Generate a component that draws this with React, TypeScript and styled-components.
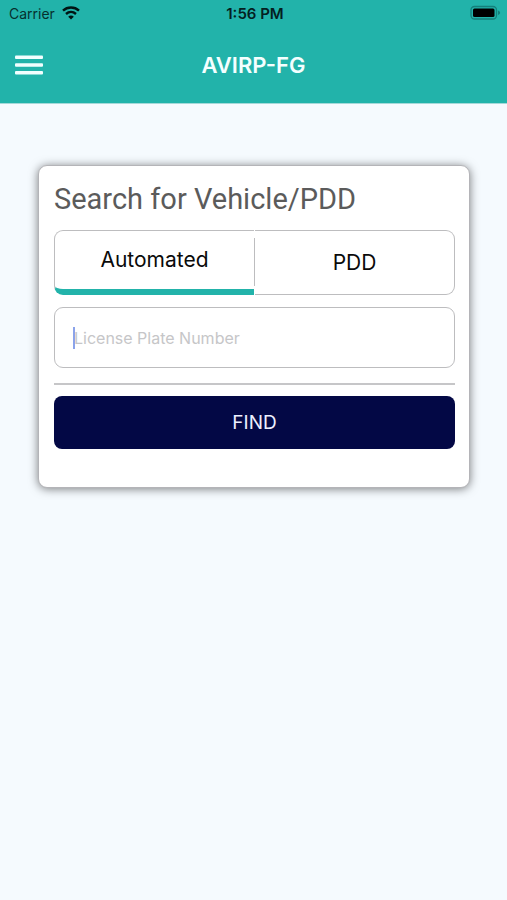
import React, { useState } from "react";
import styled, { createGlobalStyle } from "styled-components";

const teal = "#22b3aa";
const line = "#bdbdbf";

const GlobalStyle = createGlobalStyle`
  * { box-sizing: border-box; }
  body {
    margin: 0;
    background: #f5fafe;
    font-family: Inter, "Liberation Sans", sans-serif;
  }
  button, input { font-family: inherit; }
`;

const Header = styled.header`
  background: ${teal};
  border-bottom: 1px solid #a5d9d9;
`;

const StatusBar = styled.div`
  display: grid;
  grid-template-columns: 1fr auto 1fr;
  align-items: center;
  height: 26px;
  padding: 0 6px 0 9px;
  font-size: 14px;
  color: #06302e;
`;

const Carrier = styled.div`
  display: flex;
  align-items: center;
  gap: 7px;
`;

const Clock = styled.time`
  font-size: 15px;
  font-weight: 600;
  color: #04201f;
`;

const BatteryIcon = styled.svg`
  justify-self: end;
`;

const NavBar = styled.div`
  display: grid;
  grid-template-columns: 44px 1fr 44px;
  align-items: center;
  height: 77px;
  padding: 0 7px;
`;

const MenuButton = styled.button`
  display: grid;
  place-items: center;
  height: 44px;
  padding: 0;
  border: 0;
  background: none;
  color: #f2ffff;
  cursor: pointer;
`;

const AppTitle = styled.h1`
  margin: 0;
  text-align: center;
  font-size: 22px;
  line-height: 24px;
  font-weight: 600;
  color: #f4ffff;
`;

const Main = styled.main`
  padding: 61px 37px 40px 38px;
`;

const Card = styled.form`
  display: flex;
  flex-direction: column;
  padding: 15px 14px 38px 15px;
  border: 1px solid #b4b4b8;
  border-radius: 9px;
  background: #fff;
  box-shadow: 0 1px 10px rgba(0, 0, 0, 0.5);
`;

const CardTitle = styled.h2`
  margin: 0 0 12px;
  font-family: Roboto, Inter, sans-serif;
  font-size: 29px;
  line-height: 37px;
  font-weight: 400;
  color: #5b5b5b;
`;

const Tabs = styled.div`
  display: grid;
  grid-template-columns: 1fr 1px 1fr;
  height: 65px;
`;

const Tab = styled.button<{ $side: "left" | "right"; $active: boolean }>`
  padding: 0;
  border: 1px solid ${line};
  border-${(p) => (p.$side === "left" ? "right" : "left")}: 0;
  border-bottom: ${(p) => (p.$active ? `6px solid ${teal}` : `1px solid ${line}`)};
  border-radius: ${(p) => (p.$side === "left" ? "9px 0 0 9px" : "0 9px 9px 0")};
  background: #fff;
  font-size: 21px;
  line-height: 28px;
  color: #0a0a0a;
  cursor: pointer;
`;

const Divider = styled.span`
  margin: 8px 0 9px;
  background: ${line};
`;

const Field = styled.label`
  position: relative;
  display: block;
  margin-top: 12px;
`;

const PlateInput = styled.input`
  display: block;
  width: 100%;
  height: 61px;
  padding: 0 19px;
  border: 1px solid ${line};
  border-radius: 9px;
  background: #fff;
  outline: none;
  font-size: 16px;
  color: #111;
  caret-color: #7f9ae8;
  &::placeholder { color: #c6c6c8; opacity: 1; }
`;

const Caret = styled.span`
  position: absolute;
  top: 20px;
  left: 19px;
  width: 2px;
  height: 22px;
  background: #8ba3ea;
`;

const Rule = styled.hr`
  width: 100%;
  height: 2px;
  margin: 15px 0 11px;
  border: 0;
  background: #c6c6c8;
`;

const FindButton = styled.button`
  height: 53px;
  border: 0;
  border-radius: 8px;
  background: #030845;
  font-size: 19px;
  line-height: 24px;
  color: #eef0ff;
  cursor: pointer;
`;

export default function App() {
  const [tab, setTab] = useState<"auto" | "pdd">("auto");
  const [plate, setPlate] = useState("");

  return (
    <>
      <GlobalStyle />
      <Header>
        <StatusBar>
          <Carrier>
            Carrier
            <svg width="18" height="14" viewBox="0 0 18 14" fill="none" stroke="#001413" strokeWidth="2.4" aria-label="Wi-Fi">
              <path d="M1 4.600C5.500.4 12.500.4 17 4.600" />
              <path d="M4 8C7 5.300 11 5.300 14 8" />
              <path d="M9 13.500 6.200 10.700C7.700 9.200 10.300 9.200 11.800 10.700Z" fill="#001413" stroke="none" />
            </svg>
          </Carrier>
          <Clock>1:56 PM</Clock>
          <BatteryIcon width="31" height="16" viewBox="0 0 31 16" aria-label="Battery full">
            <rect x="1" y="1.500" width="25.500" height="12.500" rx="3.500" fill="none" stroke="#14807b" strokeWidth="1.300" />
            <rect x="3" y="3.500" width="21.500" height="8.500" rx="1.500" fill="#000" />
            <path d="M28 5.500C30.800 6.500 30.800 9 28 10Z" fill="#14807b" />
          </BatteryIcon>
        </StatusBar>
        <NavBar>
          <MenuButton type="button" aria-label="Menu">
            <svg width="28" height="20" viewBox="0 0 28 20" fill="currentColor">
              <rect y="0.500" width="28" height="3.600" rx="1" />
              <rect y="8.200" width="28" height="3.600" rx="1" />
              <rect y="15.900" width="28" height="3.600" rx="1" />
            </svg>
          </MenuButton>
          <AppTitle>AVIRP-FG</AppTitle>
        </NavBar>
      </Header>
      <Main>
        <Card onSubmit={(e) => e.preventDefault()}>
          <CardTitle>Search for Vehicle/PDD</CardTitle>
          <Tabs role="tablist">
            <Tab type="button" role="tab" aria-selected={tab === "auto"} $side="left" $active={tab === "auto"} onClick={() => setTab("auto")}>
              Automated
            </Tab>
            <Divider />
            <Tab type="button" role="tab" aria-selected={tab === "pdd"} $side="right" $active={tab === "pdd"} onClick={() => setTab("pdd")}>
              PDD
            </Tab>
          </Tabs>
          <Field>
            <PlateInput
              type="text"
              aria-label="License Plate Number"
              placeholder="License Plate Number"
              value={plate}
              onChange={(e) => setPlate(e.target.value)}
            />
            {plate === "" && <Caret />}
          </Field>
          <Rule />
          <FindButton type="submit">FIND</FindButton>
        </Card>
      </Main>
    </>
  );
}
